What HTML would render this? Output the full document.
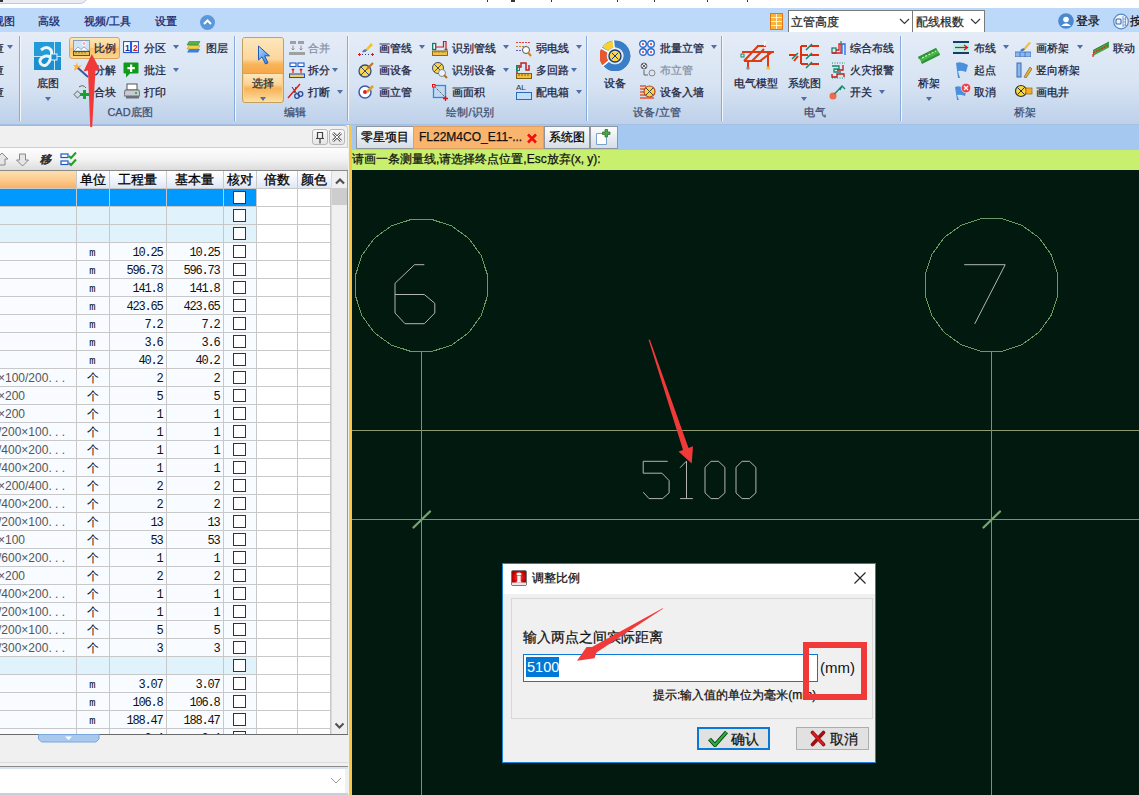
<!DOCTYPE html>
<html><head><meta charset="utf-8">
<style>
*{box-sizing:border-box;margin:0;padding:0}
html,body{width:1139px;height:795px;overflow:hidden;background:#fff;-webkit-text-stroke:0.25px currentColor;font-family:"Liberation Sans",sans-serif;font-size:12px;color:#18223e}
.a{position:absolute}
.t{position:absolute;white-space:nowrap;line-height:14px;height:14px}
#top{left:0;top:0;width:1139px;height:8px;background:#fff}
#menu{left:0;top:8px;width:1139px;height:24px;background:#bdd9fa}
#ribbon{left:0;top:32px;width:1139px;height:93px;background:linear-gradient(#e4ecf7,#d8e4f3 55%,#bed1ea);border-bottom:1px solid #a4c0e2}
.sep{position:absolute;top:36px;width:2px;height:85px;border-left:1px solid #86aadc;border-right:1px solid #f4f8fc}
.gl{position:absolute;top:105px;height:14px;line-height:14px;font-size:11px;color:#3e4e70;text-align:center;white-space:nowrap}
.dd{position:absolute;width:0;height:0;border-left:3.5px solid transparent;border-right:3.5px solid transparent;border-top:4px solid #4f6fa8}
#lp{left:0;top:125px;width:349px;height:670px;background:#f0f0f0}
#split{left:349px;top:125px;width:3px;height:670px;background:#f7c845}
#tabs{left:352px;top:125px;width:787px;height:25px;background:#a4c8ef}
#cmd{left:352px;top:150px;width:787px;height:20px;background:#c8ef6e}
#canvas{left:352px;top:170px;width:787px;height:625px;background:#021910}
.tab{position:absolute;top:126px;height:23px;border:1px solid #8e96a0;background:linear-gradient(#fbfbfc,#e9edf2 50%,#d6dde6);line-height:21px;color:#111;font-size:12px;white-space:nowrap}
.row{position:absolute;left:0;width:331px;height:18px}
.c{position:absolute;top:0;height:18px;line-height:18px;white-space:nowrap;-webkit-text-stroke:0}
.num{font-family:"Liberation Mono",monospace;font-size:12px;letter-spacing:-1.2px;color:#111;text-align:right;padding-top:1px}
.cb{position:absolute;top:2px;left:233px;width:13px;height:13px;border:1px solid #333;background:#fff}
</style></head><body>
<div id="top" class="a"></div>
<div class="a" style="left:-10px;top:-6px;width:98px;height:10px;border:1px solid #c4c8d0;border-radius:0 0 8px 8px;background:#e9edf3"></div>
<div class="a" style="left:0;top:0;width:3px;height:2px;background:#333"></div>
<div class="a" style="left:487px;top:0;width:1px;height:2px;background:#333"></div><div class="a" style="left:511px;top:0;width:4px;height:2px;background:#333"></div><div class="a" style="left:551px;top:0;width:1px;height:2px;background:#333"></div><div class="a" style="left:617px;top:0;width:1px;height:2px;background:#333"></div><div class="a" style="left:654px;top:0;width:1px;height:2px;background:#333"></div><div class="a" style="left:707px;top:0;width:1px;height:2px;background:#333"></div><div class="a" style="left:747px;top:0;width:1px;height:2px;background:#333"></div>
<div id="menu" class="a"></div>
<div class="t" style="left:-7px;top:14px;font-size:11px;color:#15246a">视图</div>
<div class="t" style="left:38px;top:14px;font-size:11px;color:#15246a">高级</div>
<div class="t" style="left:84px;top:14px;font-size:11px;color:#15246a">视频/工具</div>
<div class="t" style="left:155px;top:14px;font-size:11px;color:#15246a">设置</div>
<div class="a" style="left:200px;top:15px;width:15px;height:15px;border-radius:50%;background:#5a98dc"></div>
<svg class="a" style="left:200px;top:15px" width="15" height="15"><polyline points="4,9 7.5,5.5 11,9" fill="none" stroke="#fff" stroke-width="2"/></svg>
<svg class="a" style="left:770px;top:13px" width="13" height="17"><rect x="0.5" y="0.5" width="12" height="16" fill="#f9b23a" stroke="#e07818"/><g stroke="#fff3c8" stroke-width="1"><line x1="6.5" y1="1" x2="6.5" y2="16"/><line x1="1" y1="4.5" x2="12" y2="4.5"/><line x1="1" y1="8.5" x2="12" y2="8.5"/><line x1="1" y1="12.5" x2="12" y2="12.5"/></g></svg>
<div class="a" style="left:788px;top:10px;width:125px;height:23px;background:#fff;border:1px solid #7a7a7a;border-bottom:none"></div>
<div class="t" style="left:791px;top:15px;color:#2a2a2a;font-size:12px">立管高度</div>
<svg class="a" style="left:899px;top:18px" width="11" height="7"><polyline points="1,1 5.5,5.5 10,1" fill="none" stroke="#333" stroke-width="1.1"/></svg>
<div class="a" style="left:912px;top:10px;width:73px;height:23px;background:#fff;border:1px solid #7a7a7a;border-bottom:none"></div>
<div class="t" style="left:916px;top:15px;color:#2a2a2a;font-size:12px">配线根数</div>
<svg class="a" style="left:970px;top:18px" width="11" height="7"><polyline points="1,1 5.5,5.5 10,1" fill="none" stroke="#333" stroke-width="1.1"/></svg>
<svg class="a" style="left:1058px;top:13px" width="16" height="16"><circle cx="8" cy="8" r="7.8" fill="#4a88d0"/><circle cx="8" cy="6.5" r="2.8" fill="#fff"/><path d="M3 13 Q8 7.5 13 13 Z" fill="#fff"/></svg>
<div class="t" style="left:1076px;top:14px;color:#111">登录</div>
<svg class="a" style="left:1113px;top:13px" width="16" height="17"><circle cx="8" cy="8.5" r="7.3" fill="#eef4fb" stroke="#5a88c0" stroke-width="1.2"/><rect x="3" y="6" width="5" height="5" rx="1" fill="none" stroke="#3a6aa8" stroke-width="1.1"/><path d="M10 3v11M12.5 4v9M10 6h3M10 9h3M10 12h3" stroke="#7aa0d0" stroke-width="1"/></svg>
<div class="t" style="left:1130px;top:14px;color:#111">按</div>
<div id="ribbon" class="a"></div>
<div class="sep" style="left:19px"></div>
<div class="sep" style="left:234px"></div>
<div class="sep" style="left:347px"></div>
<div class="sep" style="left:586px"></div>
<div class="sep" style="left:721px"></div>
<div class="sep" style="left:900px"></div>
<div class="t" style="left:-7px;top:41px;font-size:11px">查</div>
<div class="t" style="left:-7px;top:63px;font-size:11px">查</div>
<div class="t" style="left:-7px;top:85px;font-size:11px">查</div>
<div class="dd" style="left:6.5px;top:45px"></div>
<svg class="a" style="left:34px;top:42px" width="27" height="28" viewBox="0 0 27 28"><rect width="27" height="28" fill="#1b8fd0"/><rect x="0" y="0" width="27" height="14" fill="#2aa3e0" opacity=".6"/><line x1="0" y1="14.5" x2="27" y2="14.5" stroke="#bfe6fa"/><line x1="20.5" y1="0" x2="20.5" y2="28" stroke="#bfe6fa"/><path d="M7 8 Q13 3 17 8 Q19 12 15 20 Q11 26 7 22 Q4 18 9 15 Q13 13 16 15" fill="none" stroke="#e8f6fd" stroke-width="3"/><rect x="17" y="12" width="6" height="6" fill="#1b8fd0" stroke="#e8f6fd"/></svg>
<div class="t" style="left:8.0px;top:76px;width:80px;text-align:center;font-size:11px">底图</div>
<div class="dd" style="left:44.5px;top:97px"></div>
<div class="a" style="left:69px;top:37px;width:51px;height:22px;border:1px solid #d9a35a;border-radius:3px;background:linear-gradient(#fde6b8,#fbd38f 50%,#f8c06a 51%,#fbd58f)"></div>
<svg class="a" style="left:73px;top:40px" width="17" height="16" viewBox="0 0 17 16"><rect x="0.5" y="0.5" width="16" height="11" fill="#cfe4f6" stroke="#8aa0b8"/><circle cx="11" cy="3.5" r="2" fill="#f8b0a0" stroke="#fff"/><path d="M1 11 L5 7 L8 9.5 L11 7 L16 11Z" fill="#fff" stroke="#7a8aa0" stroke-width=".7"/><rect x="0.5" y="11.5" width="16" height="4" fill="#e8c050" stroke="#6a5010" stroke-width="1"/><path d="M3 12v1.5M6 12v1.5M9 12v1.5M12 12v1.5" stroke="#6a5010" stroke-width=".8"/></svg>
<div class="t" style="left:94px;top:41px;font-size:11px">比例</div>
<svg class="a" style="left:73px;top:62px" width="17" height="16" viewBox="0 0 17 16"><path d="M4 0 L5 4 L9 3 L6 6 L8 9 L4 7 L1 9 L2 5 L0 3 L3 3Z" fill="#ffb040"/><line x1="5" y1="6" x2="15" y2="15" stroke="#3a5a9a" stroke-width="2"/></svg>
<div class="t" style="left:94px;top:63px;font-size:11px">分解</div>
<svg class="a" style="left:73px;top:84px" width="17" height="16" viewBox="0 0 17 16"><path d="M6 3 Q10 0 13 4" fill="none" stroke="#666" stroke-width="1"/><rect x="2" y="8" width="5" height="5" transform="rotate(45 4.5 10.5)" fill="none" stroke="#888"/><path d="M10 6h3v3h3v3h-3v3h-3v-3h-3v-3h3z" fill="#18a030"/></svg>
<div class="t" style="left:94px;top:85px;font-size:11px">合块</div>
<svg class="a" style="left:123px;top:41px" width="16" height="13" viewBox="0 0 16 13"><rect x="0.5" y="0.5" width="7" height="11" fill="#fff" stroke="#2a5ad8" stroke-width="1.2"/><rect x="8.5" y="0.5" width="7" height="11" fill="#fff" stroke="#2a5ad8" stroke-width="1.2"/><text x="2" y="9.5" font-size="8.5" font-family="Liberation Sans" fill="#1a2a88" font-weight="bold">1</text><text x="10" y="9.5" font-size="8.5" font-family="Liberation Sans" fill="#d01818" font-weight="bold">2</text></svg>
<div class="t" style="left:144px;top:41px;font-size:11px">分区</div>
<div class="dd" style="left:172.5px;top:45px"></div>
<svg class="a" style="left:123px;top:62px" width="16" height="16" viewBox="0 0 16 16"><path d="M1.5 0.5 H14.5 Q15.5 0.5 15.5 1.5 V10.5 Q15.5 11.5 14.5 11.5 H7 L3 15.5 V11.5 H1.5 Q0.5 11.5 0.5 10.5 V1.5 Q0.5 0.5 1.5 0.5Z" fill="#109a1a"/><path d="M7 2.5h2.2v2.6h2.6v2.2h-2.6v2.6h-2.2v-2.6h-2.6v-2.2h2.6z" fill="#fff"/></svg>
<div class="t" style="left:144px;top:63px;font-size:11px">批注</div>
<div class="dd" style="left:172.5px;top:68px"></div>
<svg class="a" style="left:124px;top:83px" width="16" height="16" viewBox="0 0 16 16"><rect x="3" y="1" width="10" height="6" fill="#fff" stroke="#555"/><path d="M1 7h14l1 6h-16z" fill="#c8ccd2" stroke="#555" stroke-width=".8"/><rect x="2" y="13" width="13" height="2.5" fill="#6a6e78"/><rect x="11" y="9" width="2" height="2" fill="#20c040"/></svg>
<div class="t" style="left:144px;top:85px;font-size:11px">打印</div>
<svg class="a" style="left:186px;top:41px" width="15" height="12" viewBox="0 0 15 12"><path d="M3 8 H14 L12 11.5 H1Z" fill="#3a7ee0"/><path d="M3 4.5 H14 L12 8 H1Z" fill="#f2d048" stroke="#b88a10" stroke-width=".5"/><path d="M3 0.5 H14 L12 4 H1Z" fill="#58b048" stroke="#2a7a2a" stroke-width=".5"/></svg>
<div class="t" style="left:206px;top:41px;font-size:11px">图层</div>
<div class="gl" style="left:80.0px;width:100px">CAD底图</div>
<div class="a" style="left:242px;top:37px;width:42px;height:66px;border:1px solid #c4a060;border-radius:3px;background:#fbd08a;overflow:hidden"><div class="a" style="left:0;top:0;width:40px;height:35px;background:linear-gradient(#fde6bc,#fcd79c 60%,#f8b45a 75%,#f6a848)"></div><div class="a" style="left:0;top:35px;width:40px;height:1px;background:#c8a868"></div><div class="a" style="left:1px;top:36px;width:38px;height:29px;background:linear-gradient(#fde6bc,#fbd495 35%,#f7b458 50%,#f9c070 65%,#fde4a8)"></div></div>
<svg class="a" style="left:257px;top:45px" width="14" height="22" viewBox="0 0 14 22"><defs><linearGradient id="cg" x1="0" y1="0" x2="1" y2="1"><stop offset="0" stop-color="#b8dcff"/><stop offset="1" stop-color="#2a78e0"/></linearGradient></defs><path d="M1.5 1 L1.5 15 L5 11.8 L8.5 19 L11 17.8 L7.6 10.8 L12.5 10.8Z" fill="url(#cg)" stroke="#1a5ac0" stroke-width="1"/></svg>
<div class="t" style="left:223.0px;top:76px;width:80px;text-align:center;font-size:11px;color:#2a2a2a">选择</div>
<div class="dd" style="left:259.5px;top:97px"></div>
<svg class="a" style="left:289px;top:40px" width="16" height="16" viewBox="0 0 16 16"><rect x="1" y="1" width="6" height="3" fill="#a0a0a0"/><rect x="9" y="1" width="6" height="3" fill="#a0a0a0"/><rect x="0" y="12" width="16" height="3" fill="#a0a0a0"/><path d="M4 5.5 V10 M2.5 8.5 L4 10 L5.5 8.5 M12 5.5 V10 M10.5 8.5 L12 10 L13.5 8.5" fill="none" stroke="#888" stroke-width=".9"/></svg>
<div class="t" style="left:308px;top:41px;font-size:11px;color:#8a93a4">合并</div>
<svg class="a" style="left:289px;top:62px" width="16" height="17" viewBox="0 0 16 17"><rect x="1" y="1" width="6" height="3.5" fill="#fff" stroke="#1a58c8" stroke-width="1.1"/><rect x="9" y="1" width="6" height="3.5" fill="#fff" stroke="#1a58c8" stroke-width="1.1"/><rect x="0.5" y="12" width="15" height="3.5" fill="#f8d060" stroke="#1a58c8" stroke-width="1.1"/><path d="M4 11 V7 M2.8 8.2 L4 7 L5.2 8.2 M12 11 V7 M10.8 8.2 L12 7 L13.2 8.2" fill="none" stroke="#d81818" stroke-width="1.1"/></svg>
<div class="t" style="left:308px;top:63px;font-size:11px">拆分</div>
<div class="dd" style="left:331.5px;top:68px"></div>
<svg class="a" style="left:287px;top:83px" width="18" height="17" viewBox="0 0 18 17"><path d="M5 4 L10 11 M9 4 L7 10" stroke="#333" stroke-width="1"/><circle cx="10" cy="13" r="2.3" fill="none" stroke="#2a4a9a" stroke-width="1.3"/><circle cx="13.5" cy="11" r="2.3" fill="none" stroke="#2a4a9a" stroke-width="1.3"/><line x1="1" y1="15" x2="13" y2="1" stroke="#e81818" stroke-width="1.4"/></svg>
<div class="t" style="left:308px;top:85px;font-size:11px">打断</div>
<div class="dd" style="left:336.5px;top:90px"></div>
<div class="gl" style="left:245.0px;width:100px">编辑</div>
<svg class="a" style="left:358px;top:41px" width="16" height="15" viewBox="0 0 16 15"><path d="M7 9 L13 2 L15 4 L9 10Z" fill="#f0c030"/><path d="M4 11 Q6 7 9 9 Q8 12 4 11Z" fill="#4a78c8"/><line x1="1" y1="13.5" x2="15" y2="13.5" stroke="#2a3a8a" stroke-dasharray="1 2"/><path d="M0 13.5h3M1.5 12v3M13 13.5h3M14.5 12v3" stroke="#e01818"/></svg>
<div class="t" style="left:379px;top:41px;font-size:11px">画管线</div>
<div class="dd" style="left:418.5px;top:45px"></div>
<svg class="a" style="left:358px;top:62px" width="16" height="16" viewBox="0 0 16 16"><circle cx="7" cy="9" r="6" fill="#f4d850" stroke="#3a4a7a" stroke-width="1.3"/><line x1="3" y1="5" x2="11" y2="13" stroke="#3a4a7a"/><line x1="11" y1="5" x2="3" y2="13" stroke="#3a4a7a"/><path d="M9 7 L15 1" stroke="#c07020" stroke-width="2"/></svg>
<div class="t" style="left:379px;top:63px;font-size:11px">画设备</div>
<svg class="a" style="left:358px;top:84px" width="16" height="15" viewBox="0 0 16 15"><circle cx="7" cy="8" r="6" fill="#fff" stroke="#3a5ab0" stroke-width="1.5"/><circle cx="7" cy="8" r="2" fill="#e02020"/><path d="M9 8 L15 2" stroke="#e0a020" stroke-width="2.5"/></svg>
<div class="t" style="left:379px;top:85px;font-size:11px">画立管</div>
<svg class="a" style="left:432px;top:40px" width="16" height="17" viewBox="0 0 16 17"><rect x="0.7" y="3.5" width="3" height="6" fill="#fff" stroke="#117766" stroke-width="1.3"/><path d="M4 7 H11.5 V1.5 H14 V9" fill="none" stroke="#d01818" stroke-width="1.2"/><path d="M12.5 9.5 H15.5" stroke="#117766" stroke-width="1.5"/><rect x="0.5" y="11" width="15" height="4.5" fill="#f0c048" stroke="#806010" stroke-width=".9"/><path d="M3 11v2M5 11v1.3M7 11v2M9 11v1.3M11 11v2M13 11v1.3" stroke="#806010" stroke-width=".7"/></svg>
<div class="t" style="left:452px;top:41px;font-size:11px">识别管线</div>
<div class="dd" style="left:502.5px;top:45px"></div>
<svg class="a" style="left:432px;top:62px" width="16" height="17" viewBox="0 0 16 17"><circle cx="6" cy="6" r="5.5" fill="#f4d850" stroke="#4a4a6a"/><line x1="2" y1="2" x2="10" y2="10" stroke="#4a4a6a"/><line x1="10" y1="2" x2="2" y2="10" stroke="#4a4a6a"/><circle cx="10" cy="11" r="3.5" fill="#eef4fb" stroke="#7a8aa0"/><line x1="12" y1="13" x2="15" y2="16" stroke="#b07020" stroke-width="2"/></svg>
<div class="t" style="left:452px;top:63px;font-size:11px">识别设备</div>
<div class="dd" style="left:502.5px;top:68px"></div>
<svg class="a" style="left:432px;top:84px" width="16" height="17" viewBox="0 0 16 17"><rect x="1.5" y="1.5" width="12" height="12" fill="#c0d8f0" stroke="#2a8ae8" stroke-width="1.3"/><line x1="2" y1="2" x2="13" y2="13" stroke="#333" stroke-dasharray="1 1.2"/><rect x="0.5" y="0.5" width="2.5" height="2.5" fill="#fff" stroke="#e01010" stroke-width="1"/><path d="M11 14.5h5M13.5 12v5" stroke="#e01010" stroke-width="1.3"/></svg>
<div class="t" style="left:452px;top:85px;font-size:11px">画面积</div>
<svg class="a" style="left:516px;top:40px" width="16" height="17" viewBox="0 0 16 17"><line x1="0" y1="2.5" x2="14" y2="2.5" stroke="#e04040" stroke-dasharray="2 1"/><line x1="0" y1="6.5" x2="10" y2="6.5" stroke="#c09030" stroke-dasharray="2 1"/><line x1="0" y1="10.5" x2="8" y2="10.5" stroke="#6a5ab8" stroke-dasharray="2 1"/><circle cx="10" cy="10" r="3.5" fill="#fff" stroke="#555"/><line x1="12" y1="12.5" x2="15" y2="16" stroke="#d08020" stroke-width="2"/></svg>
<div class="t" style="left:536px;top:41px;font-size:11px">弱电线</div>
<div class="dd" style="left:575.5px;top:45px"></div>
<svg class="a" style="left:516px;top:62px" width="16" height="17" viewBox="0 0 16 17"><path d="M1 11 V5 H5 V1 H10 V8 H13 V3" fill="none" stroke="#c02020" stroke-width="1.5"/><rect x="0.5" y="3.5" width="3" height="5" fill="none" stroke="#118866"/><rect x="0.5" y="11.5" width="15" height="5" fill="#f0c040" stroke="#806010"/><path d="M3 12v2M6 12v2M9 12v2M12 12v2" stroke="#806010"/></svg>
<div class="t" style="left:536px;top:63px;font-size:11px">多回路</div>
<div class="dd" style="left:570.5px;top:68px"></div>
<svg class="a" style="left:516px;top:83px" width="16" height="17" viewBox="0 0 16 17"><text x="0" y="7" font-size="8" font-family="Liberation Sans" fill="#333">AL</text><rect x="0.5" y="9.5" width="15" height="7" fill="#bfe0f8" stroke="#2a6ab8"/></svg>
<div class="t" style="left:536px;top:85px;font-size:11px">配电箱</div>
<div class="dd" style="left:575.5px;top:90px"></div>
<div class="gl" style="left:420.0px;width:100px">绘制/识别</div>
<svg class="a" style="left:600px;top:40px" width="31" height="31" viewBox="0 0 31 31"><circle cx="15" cy="16" r="12" fill="none" stroke="#3a7ec8" stroke-width="6.5"/><path d="M4.82 9.64 A12 12 0 1 1 4.61 10.00" fill="none" stroke="#3a7ec8" stroke-width="6.5"/><path d="M5.29 23.05 A12 12 0 0 1 4.21 10.74" fill="none" stroke="#e8582c" stroke-width="7"/><path d="M5.29 8.95 A12 12 0 0 1 13.33 4.12" fill="none" stroke="#f8d030" stroke-width="7"/><path d="M8.94 12.50 L1.14 8.00 M14.27 9.04 L13.33 0.09 M9.56 20.41 L2.57 26.07" stroke="#fff" stroke-width="1.5"/><circle cx="15" cy="16" r="6" fill="#f8d850" stroke="#1a3a7a" stroke-width="1.4"/><path d="M11.8 12.8 L18.2 19.2 M18.2 12.8 L11.8 19.2" stroke="#1a3a7a" stroke-width="1"/></svg>
<div class="t" style="left:574.5px;top:76px;width:80px;text-align:center;font-size:11px">设备</div>
<svg class="a" style="left:639px;top:40px" width="16" height="16" viewBox="0 0 16 16"><circle cx="4" cy="4" r="3.3" fill="#fff" stroke="#2a6ad8" stroke-width="1.4"/><circle cx="12" cy="4" r="3.3" fill="#fff" stroke="#2a6ad8" stroke-width="1.4"/><circle cx="4" cy="12" r="3.3" fill="#fff" stroke="#2a6ad8" stroke-width="1.4"/><circle cx="12" cy="12" r="3.3" fill="#fff" stroke="#2a6ad8" stroke-width="1.4"/><circle cx="4" cy="4" r="1" fill="#e02020"/><circle cx="12" cy="4" r="1" fill="#e02020"/><circle cx="4" cy="12" r="1" fill="#e02020"/><circle cx="12" cy="12" r="1" fill="#e02020"/></svg>
<div class="t" style="left:660px;top:41px;font-size:11px">批量立管</div>
<div class="dd" style="left:710.5px;top:45px"></div>
<svg class="a" style="left:640px;top:62px" width="16" height="16" viewBox="0 0 16 16"><circle cx="4" cy="4" r="3" fill="none" stroke="#666"/><line x1="2" y1="2" x2="6" y2="6" stroke="#666"/><line x1="6" y1="2" x2="2" y2="6" stroke="#666"/><circle cx="12" cy="11" r="3" fill="none" stroke="#888"/><path d="M4 8 V13 H8" fill="none" stroke="#666"/></svg>
<div class="t" style="left:660px;top:63px;font-size:11px;color:#8a93a4">布立管</div>
<svg class="a" style="left:640px;top:84px" width="16" height="15" viewBox="0 0 16 15"><path d="M0 2h6M0 5h6M0 8h6M0 11h6M0 14h14" stroke="#e05a30" stroke-width="1.3"/><circle cx="9.5" cy="7.5" r="5.5" fill="#f8d840" stroke="#c04020" stroke-width="1.2"/><line x1="6" y1="4" x2="13" y2="11" stroke="#444"/><line x1="13" y1="4" x2="6" y2="11" stroke="#444"/></svg>
<div class="t" style="left:660px;top:85px;font-size:11px">设备入墙</div>
<div class="gl" style="left:607.0px;width:100px">设备/立管</div>
<svg class="a" style="left:740px;top:41px" width="34" height="29" viewBox="0 0 34 29"><path d="M2 11 H34 M17 5 H26 M4 20 L18 5 M12 20 L24 8 M20 20 L32 11 M28 11 V26 M8 20 V26 M4 20 H22" fill="none" stroke="#e03a10" stroke-width="2"/><rect x="24" y="0" width="1.5" height="5" fill="#fff"/><rect x="1" y="13" width="3" height="3" fill="none" stroke="#118866"/><rect x="6.5" y="26" width="3" height="2.5" fill="#888"/><rect x="26.5" y="25.5" width="3.5" height="3" fill="#f8c030"/></svg>
<div class="t" style="left:716.0px;top:76px;width:80px;text-align:center;font-size:11px">电气模型</div>
<svg class="a" style="left:788px;top:42px" width="32" height="27" viewBox="0 0 32 27"><path d="M1 13 H8 M10 14 L6 19 M13 4 V22 M13 4 H19 M13 13 H20 M13 22 H20 M22 4 H31 M22 13 H31 M22 22 H31" fill="none" stroke="#e03010" stroke-width="2"/><path d="M4 17 L10 11 M18 8 L24 2 M18 17 L24 11 M18 26 L24 20" stroke="#118866" stroke-width="1.5"/></svg>
<div class="t" style="left:764.5px;top:76px;width:80px;text-align:center;font-size:11px">系统图</div>
<div class="dd" style="left:801.0px;top:97px"></div>
<svg class="a" style="left:831px;top:40px" width="15" height="16" viewBox="0 0 15 16"><rect x="1" y="8" width="4" height="5" fill="none" stroke="#118866" stroke-width="1.3"/><path d="M5 10 H8 V4 H10 V13 H1" fill="none" stroke="#d02020" stroke-width="1.3"/><path d="M11 14 V4 H14 V15" fill="none" stroke="#2a6ae0" stroke-width="1.3"/><path d="M10 1 V4" stroke="#20a040" stroke-width="1.3"/></svg>
<div class="t" style="left:850px;top:41px;font-size:11px">综合布线</div>
<svg class="a" style="left:831px;top:62px" width="15" height="17" viewBox="0 0 15 17"><path d="M1 1 H14 M1 16 H14" stroke="#118866" stroke-width="1" stroke-dasharray="1 1.5"/><path d="M1 4 H8 V7 H3 V10 H10" fill="none" stroke="#118866" stroke-width="1.3"/><path d="M12 3 V8 H6 M1 12 V15 H6 V12 H13 V15" fill="none" stroke="#c01818" stroke-width="1.3"/></svg>
<div class="t" style="left:850px;top:63px;font-size:11px">火灾报警</div>
<svg class="a" style="left:829px;top:83px" width="17" height="17" viewBox="0 0 17 17"><circle cx="4" cy="13" r="3.5" fill="#f06a4a"/><path d="M5.5 11 L13 3 L16 6 M13 3 L11 7" fill="none" stroke="#118866" stroke-width="1.4"/></svg>
<div class="t" style="left:850px;top:85px;font-size:11px">开关</div>
<div class="dd" style="left:878.5px;top:90px"></div>
<div class="gl" style="left:765.0px;width:100px">电气</div>
<svg class="a" style="left:917px;top:46px" width="25" height="19" viewBox="0 0 25 19"><path d="M1 11 L19 2 L23 8 L5 17Z" fill="#48b44a"/><path d="M1 11 L19 2 L20 4 L2 13Z" fill="#2e9434"/><path d="M4 16 L22 7 L23 9 L5 18Z" fill="#2e9434"/><path d="M5 12 L19 5" stroke="#c8f0c0" stroke-width="1.2" stroke-dasharray="2 1.6"/></svg>
<div class="t" style="left:889.0px;top:76px;width:80px;text-align:center;font-size:11px">桥架</div>
<div class="dd" style="left:925.5px;top:97px"></div>
<svg class="a" style="left:953px;top:41px" width="16" height="13" viewBox="0 0 16 13"><rect x="0" y="2" width="16" height="9" fill="#b8f2e6"/><rect x="0" y="0" width="16" height="2" fill="#1a3a6a"/><rect x="0" y="11" width="16" height="2" fill="#1a3a6a"/><line x1="2" y1="6.5" x2="14" y2="6.5" stroke="#e01010" stroke-width="1.3"/><path d="M11 4 L14.5 6.5 L11 9" fill="none" stroke="#e01010" stroke-width="1.3"/></svg>
<div class="t" style="left:974px;top:41px;font-size:11px">布线</div>
<div class="dd" style="left:1002.5px;top:45px"></div>
<svg class="a" style="left:955px;top:62px" width="14" height="16" viewBox="0 0 14 16"><path d="M1 1 Q6 -1 13 3 L11 10 Q6 8 3 9 L5 16 L3 16Z" fill="#4a90dc"/></svg>
<div class="t" style="left:974px;top:63px;font-size:11px">起点</div>
<svg class="a" style="left:953px;top:83px" width="18" height="18" viewBox="0 0 18 18"><path d="M2 4 Q7 2 14 6 L12 13 Q7 11 4 12 L6 17 L4 17Z" fill="#4a90dc"/><circle cx="13" cy="5" r="4.8" fill="#e8404a" stroke="#fff" stroke-width=".6"/><path d="M11 3l4 4M15 3l-4 4" stroke="#fff" stroke-width="1.2"/></svg>
<div class="t" style="left:974px;top:85px;font-size:11px">取消</div>
<svg class="a" style="left:1015px;top:40px" width="16" height="17" viewBox="0 0 16 17"><path d="M8 9 L14 2 L16 3 L10 10Z" fill="#f0c030"/><path d="M5 11 Q7 7 10 9 Q9 12 5 11Z" fill="#4a78c8"/><rect x="0" y="12" width="16" height="5" fill="#8ab8e8" stroke="#3a6ab8" stroke-width=".8"/><path d="M5 12v5M10 12v5" stroke="#3a6ab8" stroke-width=".8"/></svg>
<div class="t" style="left:1036px;top:41px;font-size:11px">画桥架</div>
<div class="dd" style="left:1076.5px;top:45px"></div>
<svg class="a" style="left:1016px;top:62px" width="16" height="16" viewBox="0 0 16 16"><rect x="1" y="1" width="4" height="14" fill="#8ab8e8" stroke="#3a6ab8"/><path d="M8 15 L14 5 L16 7 L10 16Z" fill="#e8b040" stroke="#806020" stroke-width=".7"/></svg>
<div class="t" style="left:1036px;top:63px;font-size:11px">竖向桥架</div>
<svg class="a" style="left:1015px;top:84px" width="18" height="14" viewBox="0 0 18 14"><circle cx="6" cy="7" r="5.5" fill="#f8d840" stroke="#333" stroke-width="1.2"/><line x1="2.5" y1="3.5" x2="9.5" y2="10.5" stroke="#333"/><line x1="9.5" y1="3.5" x2="2.5" y2="10.5" stroke="#333"/><rect x="11" y="4" width="6" height="6" fill="#f0b020" stroke="#a06010" stroke-width=".7"/></svg>
<div class="t" style="left:1036px;top:85px;font-size:11px">画电井</div>
<svg class="a" style="left:1092px;top:41px" width="18" height="16" viewBox="0 0 18 16"><path d="M1 9.5 L17 1 L17 6.5 L1 15Z" fill="#44a848"/><path d="M1 9.5 L17 1" stroke="#2a8030" stroke-width="1"/><path d="M1 12 L17 3.8" stroke="#e82020" stroke-width="1.4" stroke-dasharray="2 1"/><path d="M1 13 L1 16" stroke="#e82020" stroke-width="1.2"/></svg>
<div class="t" style="left:1113px;top:41px;font-size:11px">联动</div>
<div class="gl" style="left:974.5px;width:100px">桥架</div><div id="lp" class="a"></div>
<div class="a" style="left:-4px;top:125px;width:352px;height:23px;border:1px solid #cfcfcf;border-top-color:#b4b4b4;border-radius:0 4px 0 0;background:#f0f0f0"></div>
<div class="a" style="left:312px;top:129px;width:16px;height:16px;border:1px solid #b8b8b8;border-radius:3px;background:linear-gradient(#fafafa,#e6e6e6)"></div>
<div class="a" style="left:329px;top:129px;width:16px;height:16px;border:1px solid #b8b8b8;border-radius:3px;background:linear-gradient(#fafafa,#e6e6e6)"></div>
<svg class="a" style="left:312px;top:129px" width="16" height="16"><path d="M5.5 3.5h5v6h-5z M4 9.5h8 M8 9.5v5" fill="none" stroke="#444" stroke-width="1.2"/></svg>
<svg class="a" style="left:329px;top:129px" width="16" height="16"><path d="M4 4 L12 12 M12 4 L4 12" stroke="#666" stroke-width="2.6"/><path d="M4 4 L12 12 M12 4 L4 12" stroke="#fff" stroke-width="1"/></svg>
<div class="a" style="left:0;top:148px;width:348px;height:23px;background:linear-gradient(#fdfdfd,#f4f4f4 50%,#dcdcdc);border-bottom:1px solid #8a8a8a"></div>
<svg class="a" style="left:0;top:152px" width="80" height="16"><path d="M-4 7 L2 1 L8 7 L5 7 L5 13 L-1 13 L-1 7Z" fill="#e6e6e6" stroke="#888" stroke-width="1"/><path d="M16.5 8 L22.5 14 L28.5 8 L25.5 8 L25.5 2 L19.5 2 L19.5 8Z" fill="#e6e6e6" stroke="#888" stroke-width="1"/></svg>
<div class="t" style="left:40px;top:152px;font-size:11px;font-weight:bold;color:#333;font-family:'Liberation Serif',serif;font-style:italic">移</div>
<svg class="a" style="left:60px;top:152px" width="18" height="15"><rect x="1" y="2" width="7" height="3.5" fill="#fff" stroke="#1a5ac8" stroke-width="1.2"/><rect x="1" y="9" width="7" height="3.5" fill="#fff" stroke="#1a5ac8" stroke-width="1.2"/><path d="M9 4 L11 6 L16 0.5 M9 11 L11 13 L16 7.5" fill="none" stroke="#20a020" stroke-width="2"/></svg>
<div class="a" style="left:0;top:171px;width:331px;height:18px;background:linear-gradient(#ffffff,#eef3fb 60%,#dde6f4);border-bottom:1px solid #c8c8c8"></div>
<div class="a" style="left:0;top:171px;width:76px;height:17px;background:linear-gradient(#fde0b0,#fcc888 60%,#f8b06a)"></div>
<div class="a" style="left:76px;top:171px;width:1px;height:18px;background:#c8c8c8"></div>
<div class="c" style="left:76px;top:171px;width:33px;text-align:center;color:#000;font-size:12.5px;-webkit-text-stroke:0.3px #000">单位</div>
<div class="a" style="left:109px;top:171px;width:1px;height:18px;background:#c8c8c8"></div>
<div class="c" style="left:109px;top:171px;width:57px;text-align:center;color:#000;font-size:12.5px;-webkit-text-stroke:0.3px #000">工程量</div>
<div class="a" style="left:166px;top:171px;width:1px;height:18px;background:#c8c8c8"></div>
<div class="c" style="left:166px;top:171px;width:57px;text-align:center;color:#000;font-size:12.5px;-webkit-text-stroke:0.3px #000">基本量</div>
<div class="a" style="left:223px;top:171px;width:1px;height:18px;background:#c8c8c8"></div>
<div class="c" style="left:223px;top:171px;width:33px;text-align:center;color:#000;font-size:12.5px;-webkit-text-stroke:0.3px #000">核对</div>
<div class="a" style="left:256px;top:171px;width:1px;height:18px;background:#c8c8c8"></div>
<div class="c" style="left:256px;top:171px;width:41px;text-align:center;color:#000;font-size:12.5px;-webkit-text-stroke:0.3px #000">倍数</div>
<div class="a" style="left:297px;top:171px;width:1px;height:18px;background:#c8c8c8"></div>
<div class="c" style="left:297px;top:171px;width:33px;text-align:center;color:#000;font-size:12.5px;-webkit-text-stroke:0.3px #000">颜色</div>
<div class="a" style="left:0;top:189px;width:331px;height:545px;overflow:hidden;background:#fff">
<div class="row" style="top:0px;background:#fff">
<div class="a" style="left:0;top:0;width:256px;height:18px;background:#0099ff"></div>
<div class="a" style="left:0;top:17px;width:331px;height:1px;background:#c8c8c8"></div>
<div class="a" style="left:76px;top:0;width:1px;height:18px;background:#c8c8c8"></div>
<div class="a" style="left:109px;top:0;width:1px;height:18px;background:#c8c8c8"></div>
<div class="a" style="left:166px;top:0;width:1px;height:18px;background:#c8c8c8"></div>
<div class="a" style="left:223px;top:0;width:1px;height:18px;background:#c8c8c8"></div>
<div class="a" style="left:256px;top:0;width:1px;height:18px;background:#c8c8c8"></div>
<div class="a" style="left:297px;top:0;width:1px;height:18px;background:#c8c8c8"></div>
<div class="a" style="left:330px;top:0;width:1px;height:18px;background:#c8c8c8"></div>
<div class="cb"></div>
</div>
<div class="row" style="top:18px;background:#fff">
<div class="a" style="left:0;top:0;width:256px;height:18px;background:#e0f2fc"></div>
<div class="a" style="left:0;top:17px;width:331px;height:1px;background:#c8c8c8"></div>
<div class="a" style="left:76px;top:0;width:1px;height:18px;background:#c8c8c8"></div>
<div class="a" style="left:109px;top:0;width:1px;height:18px;background:#c8c8c8"></div>
<div class="a" style="left:166px;top:0;width:1px;height:18px;background:#c8c8c8"></div>
<div class="a" style="left:223px;top:0;width:1px;height:18px;background:#c8c8c8"></div>
<div class="a" style="left:256px;top:0;width:1px;height:18px;background:#c8c8c8"></div>
<div class="a" style="left:297px;top:0;width:1px;height:18px;background:#c8c8c8"></div>
<div class="a" style="left:330px;top:0;width:1px;height:18px;background:#c8c8c8"></div>
<div class="cb"></div>
</div>
<div class="row" style="top:36px;background:#fff">
<div class="a" style="left:0;top:0;width:256px;height:18px;background:#e0f2fc"></div>
<div class="a" style="left:0;top:17px;width:331px;height:1px;background:#c8c8c8"></div>
<div class="a" style="left:76px;top:0;width:1px;height:18px;background:#c8c8c8"></div>
<div class="a" style="left:109px;top:0;width:1px;height:18px;background:#c8c8c8"></div>
<div class="a" style="left:166px;top:0;width:1px;height:18px;background:#c8c8c8"></div>
<div class="a" style="left:223px;top:0;width:1px;height:18px;background:#c8c8c8"></div>
<div class="a" style="left:256px;top:0;width:1px;height:18px;background:#c8c8c8"></div>
<div class="a" style="left:297px;top:0;width:1px;height:18px;background:#c8c8c8"></div>
<div class="a" style="left:330px;top:0;width:1px;height:18px;background:#c8c8c8"></div>
<div class="cb"></div>
</div>
<div class="row" style="top:54px;background:#fff">
<div class="a" style="left:0;top:0;width:256px;height:18px;background:#f8fbff"></div>
<div class="a" style="left:0;top:17px;width:331px;height:1px;background:#c8c8c8"></div>
<div class="a" style="left:76px;top:0;width:1px;height:18px;background:#c8c8c8"></div>
<div class="a" style="left:109px;top:0;width:1px;height:18px;background:#c8c8c8"></div>
<div class="a" style="left:166px;top:0;width:1px;height:18px;background:#c8c8c8"></div>
<div class="a" style="left:223px;top:0;width:1px;height:18px;background:#c8c8c8"></div>
<div class="a" style="left:256px;top:0;width:1px;height:18px;background:#c8c8c8"></div>
<div class="a" style="left:297px;top:0;width:1px;height:18px;background:#c8c8c8"></div>
<div class="a" style="left:330px;top:0;width:1px;height:18px;background:#c8c8c8"></div>
<div class="c" style="left:76px;width:33px;text-align:center;font-family:Liberation Mono;font-size:10.5px;color:#111;padding-top:1px">m</div>
<div class="c num" style="left:109px;width:53.5px">10.25</div>
<div class="c num" style="left:166px;width:53.5px">10.25</div>
<div class="cb"></div>
</div>
<div class="row" style="top:72px;background:#fff">
<div class="a" style="left:0;top:0;width:256px;height:18px;background:#f8fbff"></div>
<div class="a" style="left:0;top:17px;width:331px;height:1px;background:#c8c8c8"></div>
<div class="a" style="left:76px;top:0;width:1px;height:18px;background:#c8c8c8"></div>
<div class="a" style="left:109px;top:0;width:1px;height:18px;background:#c8c8c8"></div>
<div class="a" style="left:166px;top:0;width:1px;height:18px;background:#c8c8c8"></div>
<div class="a" style="left:223px;top:0;width:1px;height:18px;background:#c8c8c8"></div>
<div class="a" style="left:256px;top:0;width:1px;height:18px;background:#c8c8c8"></div>
<div class="a" style="left:297px;top:0;width:1px;height:18px;background:#c8c8c8"></div>
<div class="a" style="left:330px;top:0;width:1px;height:18px;background:#c8c8c8"></div>
<div class="c" style="left:76px;width:33px;text-align:center;font-family:Liberation Mono;font-size:10.5px;color:#111;padding-top:1px">m</div>
<div class="c num" style="left:109px;width:53.5px">596.73</div>
<div class="c num" style="left:166px;width:53.5px">596.73</div>
<div class="cb"></div>
</div>
<div class="row" style="top:90px;background:#fff">
<div class="a" style="left:0;top:0;width:256px;height:18px;background:#f8fbff"></div>
<div class="a" style="left:0;top:17px;width:331px;height:1px;background:#c8c8c8"></div>
<div class="a" style="left:76px;top:0;width:1px;height:18px;background:#c8c8c8"></div>
<div class="a" style="left:109px;top:0;width:1px;height:18px;background:#c8c8c8"></div>
<div class="a" style="left:166px;top:0;width:1px;height:18px;background:#c8c8c8"></div>
<div class="a" style="left:223px;top:0;width:1px;height:18px;background:#c8c8c8"></div>
<div class="a" style="left:256px;top:0;width:1px;height:18px;background:#c8c8c8"></div>
<div class="a" style="left:297px;top:0;width:1px;height:18px;background:#c8c8c8"></div>
<div class="a" style="left:330px;top:0;width:1px;height:18px;background:#c8c8c8"></div>
<div class="c" style="left:76px;width:33px;text-align:center;font-family:Liberation Mono;font-size:10.5px;color:#111;padding-top:1px">m</div>
<div class="c num" style="left:109px;width:53.5px">141.8</div>
<div class="c num" style="left:166px;width:53.5px">141.8</div>
<div class="cb"></div>
</div>
<div class="row" style="top:108px;background:#fff">
<div class="a" style="left:0;top:0;width:256px;height:18px;background:#f8fbff"></div>
<div class="a" style="left:0;top:17px;width:331px;height:1px;background:#c8c8c8"></div>
<div class="a" style="left:76px;top:0;width:1px;height:18px;background:#c8c8c8"></div>
<div class="a" style="left:109px;top:0;width:1px;height:18px;background:#c8c8c8"></div>
<div class="a" style="left:166px;top:0;width:1px;height:18px;background:#c8c8c8"></div>
<div class="a" style="left:223px;top:0;width:1px;height:18px;background:#c8c8c8"></div>
<div class="a" style="left:256px;top:0;width:1px;height:18px;background:#c8c8c8"></div>
<div class="a" style="left:297px;top:0;width:1px;height:18px;background:#c8c8c8"></div>
<div class="a" style="left:330px;top:0;width:1px;height:18px;background:#c8c8c8"></div>
<div class="c" style="left:76px;width:33px;text-align:center;font-family:Liberation Mono;font-size:10.5px;color:#111;padding-top:1px">m</div>
<div class="c num" style="left:109px;width:53.5px">423.65</div>
<div class="c num" style="left:166px;width:53.5px">423.65</div>
<div class="cb"></div>
</div>
<div class="row" style="top:126px;background:#fff">
<div class="a" style="left:0;top:0;width:256px;height:18px;background:#f8fbff"></div>
<div class="a" style="left:0;top:17px;width:331px;height:1px;background:#c8c8c8"></div>
<div class="a" style="left:76px;top:0;width:1px;height:18px;background:#c8c8c8"></div>
<div class="a" style="left:109px;top:0;width:1px;height:18px;background:#c8c8c8"></div>
<div class="a" style="left:166px;top:0;width:1px;height:18px;background:#c8c8c8"></div>
<div class="a" style="left:223px;top:0;width:1px;height:18px;background:#c8c8c8"></div>
<div class="a" style="left:256px;top:0;width:1px;height:18px;background:#c8c8c8"></div>
<div class="a" style="left:297px;top:0;width:1px;height:18px;background:#c8c8c8"></div>
<div class="a" style="left:330px;top:0;width:1px;height:18px;background:#c8c8c8"></div>
<div class="c" style="left:76px;width:33px;text-align:center;font-family:Liberation Mono;font-size:10.5px;color:#111;padding-top:1px">m</div>
<div class="c num" style="left:109px;width:53.5px">7.2</div>
<div class="c num" style="left:166px;width:53.5px">7.2</div>
<div class="cb"></div>
</div>
<div class="row" style="top:144px;background:#fff">
<div class="a" style="left:0;top:0;width:256px;height:18px;background:#f8fbff"></div>
<div class="a" style="left:0;top:17px;width:331px;height:1px;background:#c8c8c8"></div>
<div class="a" style="left:76px;top:0;width:1px;height:18px;background:#c8c8c8"></div>
<div class="a" style="left:109px;top:0;width:1px;height:18px;background:#c8c8c8"></div>
<div class="a" style="left:166px;top:0;width:1px;height:18px;background:#c8c8c8"></div>
<div class="a" style="left:223px;top:0;width:1px;height:18px;background:#c8c8c8"></div>
<div class="a" style="left:256px;top:0;width:1px;height:18px;background:#c8c8c8"></div>
<div class="a" style="left:297px;top:0;width:1px;height:18px;background:#c8c8c8"></div>
<div class="a" style="left:330px;top:0;width:1px;height:18px;background:#c8c8c8"></div>
<div class="c" style="left:76px;width:33px;text-align:center;font-family:Liberation Mono;font-size:10.5px;color:#111;padding-top:1px">m</div>
<div class="c num" style="left:109px;width:53.5px">3.6</div>
<div class="c num" style="left:166px;width:53.5px">3.6</div>
<div class="cb"></div>
</div>
<div class="row" style="top:162px;background:#fff">
<div class="a" style="left:0;top:0;width:256px;height:18px;background:#f8fbff"></div>
<div class="a" style="left:0;top:17px;width:331px;height:1px;background:#c8c8c8"></div>
<div class="a" style="left:76px;top:0;width:1px;height:18px;background:#c8c8c8"></div>
<div class="a" style="left:109px;top:0;width:1px;height:18px;background:#c8c8c8"></div>
<div class="a" style="left:166px;top:0;width:1px;height:18px;background:#c8c8c8"></div>
<div class="a" style="left:223px;top:0;width:1px;height:18px;background:#c8c8c8"></div>
<div class="a" style="left:256px;top:0;width:1px;height:18px;background:#c8c8c8"></div>
<div class="a" style="left:297px;top:0;width:1px;height:18px;background:#c8c8c8"></div>
<div class="a" style="left:330px;top:0;width:1px;height:18px;background:#c8c8c8"></div>
<div class="c" style="left:76px;width:33px;text-align:center;font-family:Liberation Mono;font-size:10.5px;color:#111;padding-top:1px">m</div>
<div class="c num" style="left:109px;width:53.5px">40.2</div>
<div class="c num" style="left:166px;width:53.5px">40.2</div>
<div class="cb"></div>
</div>
<div class="row" style="top:180px;background:#fff">
<div class="a" style="left:0;top:0;width:256px;height:18px;background:#f8fbff"></div>
<div class="a" style="left:0;top:17px;width:331px;height:1px;background:#c8c8c8"></div>
<div class="a" style="left:76px;top:0;width:1px;height:18px;background:#c8c8c8"></div>
<div class="a" style="left:109px;top:0;width:1px;height:18px;background:#c8c8c8"></div>
<div class="a" style="left:166px;top:0;width:1px;height:18px;background:#c8c8c8"></div>
<div class="a" style="left:223px;top:0;width:1px;height:18px;background:#c8c8c8"></div>
<div class="a" style="left:256px;top:0;width:1px;height:18px;background:#c8c8c8"></div>
<div class="a" style="left:297px;top:0;width:1px;height:18px;background:#c8c8c8"></div>
<div class="a" style="left:330px;top:0;width:1px;height:18px;background:#c8c8c8"></div>
<div class="c" style="left:-2px;color:#555;font-size:12px">×100/200. . .</div>
<div class="c" style="left:76px;width:33px;text-align:center;color:#111;font-size:12px">个</div>
<div class="c num" style="left:109px;width:53.5px">2</div>
<div class="c num" style="left:166px;width:53.5px">2</div>
<div class="cb"></div>
</div>
<div class="row" style="top:198px;background:#fff">
<div class="a" style="left:0;top:0;width:256px;height:18px;background:#f8fbff"></div>
<div class="a" style="left:0;top:17px;width:331px;height:1px;background:#c8c8c8"></div>
<div class="a" style="left:76px;top:0;width:1px;height:18px;background:#c8c8c8"></div>
<div class="a" style="left:109px;top:0;width:1px;height:18px;background:#c8c8c8"></div>
<div class="a" style="left:166px;top:0;width:1px;height:18px;background:#c8c8c8"></div>
<div class="a" style="left:223px;top:0;width:1px;height:18px;background:#c8c8c8"></div>
<div class="a" style="left:256px;top:0;width:1px;height:18px;background:#c8c8c8"></div>
<div class="a" style="left:297px;top:0;width:1px;height:18px;background:#c8c8c8"></div>
<div class="a" style="left:330px;top:0;width:1px;height:18px;background:#c8c8c8"></div>
<div class="c" style="left:-2px;color:#555;font-size:12px">×200</div>
<div class="c" style="left:76px;width:33px;text-align:center;color:#111;font-size:12px">个</div>
<div class="c num" style="left:109px;width:53.5px">5</div>
<div class="c num" style="left:166px;width:53.5px">5</div>
<div class="cb"></div>
</div>
<div class="row" style="top:216px;background:#fff">
<div class="a" style="left:0;top:0;width:256px;height:18px;background:#f8fbff"></div>
<div class="a" style="left:0;top:17px;width:331px;height:1px;background:#c8c8c8"></div>
<div class="a" style="left:76px;top:0;width:1px;height:18px;background:#c8c8c8"></div>
<div class="a" style="left:109px;top:0;width:1px;height:18px;background:#c8c8c8"></div>
<div class="a" style="left:166px;top:0;width:1px;height:18px;background:#c8c8c8"></div>
<div class="a" style="left:223px;top:0;width:1px;height:18px;background:#c8c8c8"></div>
<div class="a" style="left:256px;top:0;width:1px;height:18px;background:#c8c8c8"></div>
<div class="a" style="left:297px;top:0;width:1px;height:18px;background:#c8c8c8"></div>
<div class="a" style="left:330px;top:0;width:1px;height:18px;background:#c8c8c8"></div>
<div class="c" style="left:-2px;color:#555;font-size:12px">×200</div>
<div class="c" style="left:76px;width:33px;text-align:center;color:#111;font-size:12px">个</div>
<div class="c num" style="left:109px;width:53.5px">1</div>
<div class="c num" style="left:166px;width:53.5px">1</div>
<div class="cb"></div>
</div>
<div class="row" style="top:234px;background:#fff">
<div class="a" style="left:0;top:0;width:256px;height:18px;background:#f8fbff"></div>
<div class="a" style="left:0;top:17px;width:331px;height:1px;background:#c8c8c8"></div>
<div class="a" style="left:76px;top:0;width:1px;height:18px;background:#c8c8c8"></div>
<div class="a" style="left:109px;top:0;width:1px;height:18px;background:#c8c8c8"></div>
<div class="a" style="left:166px;top:0;width:1px;height:18px;background:#c8c8c8"></div>
<div class="a" style="left:223px;top:0;width:1px;height:18px;background:#c8c8c8"></div>
<div class="a" style="left:256px;top:0;width:1px;height:18px;background:#c8c8c8"></div>
<div class="a" style="left:297px;top:0;width:1px;height:18px;background:#c8c8c8"></div>
<div class="a" style="left:330px;top:0;width:1px;height:18px;background:#c8c8c8"></div>
<div class="c" style="left:-2px;color:#555;font-size:12px">/200×100. . .</div>
<div class="c" style="left:76px;width:33px;text-align:center;color:#111;font-size:12px">个</div>
<div class="c num" style="left:109px;width:53.5px">1</div>
<div class="c num" style="left:166px;width:53.5px">1</div>
<div class="cb"></div>
</div>
<div class="row" style="top:252px;background:#fff">
<div class="a" style="left:0;top:0;width:256px;height:18px;background:#f8fbff"></div>
<div class="a" style="left:0;top:17px;width:331px;height:1px;background:#c8c8c8"></div>
<div class="a" style="left:76px;top:0;width:1px;height:18px;background:#c8c8c8"></div>
<div class="a" style="left:109px;top:0;width:1px;height:18px;background:#c8c8c8"></div>
<div class="a" style="left:166px;top:0;width:1px;height:18px;background:#c8c8c8"></div>
<div class="a" style="left:223px;top:0;width:1px;height:18px;background:#c8c8c8"></div>
<div class="a" style="left:256px;top:0;width:1px;height:18px;background:#c8c8c8"></div>
<div class="a" style="left:297px;top:0;width:1px;height:18px;background:#c8c8c8"></div>
<div class="a" style="left:330px;top:0;width:1px;height:18px;background:#c8c8c8"></div>
<div class="c" style="left:-2px;color:#555;font-size:12px">/400×200. . .</div>
<div class="c" style="left:76px;width:33px;text-align:center;color:#111;font-size:12px">个</div>
<div class="c num" style="left:109px;width:53.5px">1</div>
<div class="c num" style="left:166px;width:53.5px">1</div>
<div class="cb"></div>
</div>
<div class="row" style="top:270px;background:#fff">
<div class="a" style="left:0;top:0;width:256px;height:18px;background:#f8fbff"></div>
<div class="a" style="left:0;top:17px;width:331px;height:1px;background:#c8c8c8"></div>
<div class="a" style="left:76px;top:0;width:1px;height:18px;background:#c8c8c8"></div>
<div class="a" style="left:109px;top:0;width:1px;height:18px;background:#c8c8c8"></div>
<div class="a" style="left:166px;top:0;width:1px;height:18px;background:#c8c8c8"></div>
<div class="a" style="left:223px;top:0;width:1px;height:18px;background:#c8c8c8"></div>
<div class="a" style="left:256px;top:0;width:1px;height:18px;background:#c8c8c8"></div>
<div class="a" style="left:297px;top:0;width:1px;height:18px;background:#c8c8c8"></div>
<div class="a" style="left:330px;top:0;width:1px;height:18px;background:#c8c8c8"></div>
<div class="c" style="left:-2px;color:#555;font-size:12px">/400×200. . .</div>
<div class="c" style="left:76px;width:33px;text-align:center;color:#111;font-size:12px">个</div>
<div class="c num" style="left:109px;width:53.5px">1</div>
<div class="c num" style="left:166px;width:53.5px">1</div>
<div class="cb"></div>
</div>
<div class="row" style="top:288px;background:#fff">
<div class="a" style="left:0;top:0;width:256px;height:18px;background:#f8fbff"></div>
<div class="a" style="left:0;top:17px;width:331px;height:1px;background:#c8c8c8"></div>
<div class="a" style="left:76px;top:0;width:1px;height:18px;background:#c8c8c8"></div>
<div class="a" style="left:109px;top:0;width:1px;height:18px;background:#c8c8c8"></div>
<div class="a" style="left:166px;top:0;width:1px;height:18px;background:#c8c8c8"></div>
<div class="a" style="left:223px;top:0;width:1px;height:18px;background:#c8c8c8"></div>
<div class="a" style="left:256px;top:0;width:1px;height:18px;background:#c8c8c8"></div>
<div class="a" style="left:297px;top:0;width:1px;height:18px;background:#c8c8c8"></div>
<div class="a" style="left:330px;top:0;width:1px;height:18px;background:#c8c8c8"></div>
<div class="c" style="left:-2px;color:#555;font-size:12px">×200/400. . .</div>
<div class="c" style="left:76px;width:33px;text-align:center;color:#111;font-size:12px">个</div>
<div class="c num" style="left:109px;width:53.5px">2</div>
<div class="c num" style="left:166px;width:53.5px">2</div>
<div class="cb"></div>
</div>
<div class="row" style="top:306px;background:#fff">
<div class="a" style="left:0;top:0;width:256px;height:18px;background:#f8fbff"></div>
<div class="a" style="left:0;top:17px;width:331px;height:1px;background:#c8c8c8"></div>
<div class="a" style="left:76px;top:0;width:1px;height:18px;background:#c8c8c8"></div>
<div class="a" style="left:109px;top:0;width:1px;height:18px;background:#c8c8c8"></div>
<div class="a" style="left:166px;top:0;width:1px;height:18px;background:#c8c8c8"></div>
<div class="a" style="left:223px;top:0;width:1px;height:18px;background:#c8c8c8"></div>
<div class="a" style="left:256px;top:0;width:1px;height:18px;background:#c8c8c8"></div>
<div class="a" style="left:297px;top:0;width:1px;height:18px;background:#c8c8c8"></div>
<div class="a" style="left:330px;top:0;width:1px;height:18px;background:#c8c8c8"></div>
<div class="c" style="left:-2px;color:#555;font-size:12px">/400×200. . .</div>
<div class="c" style="left:76px;width:33px;text-align:center;color:#111;font-size:12px">个</div>
<div class="c num" style="left:109px;width:53.5px">2</div>
<div class="c num" style="left:166px;width:53.5px">2</div>
<div class="cb"></div>
</div>
<div class="row" style="top:324px;background:#fff">
<div class="a" style="left:0;top:0;width:256px;height:18px;background:#f8fbff"></div>
<div class="a" style="left:0;top:17px;width:331px;height:1px;background:#c8c8c8"></div>
<div class="a" style="left:76px;top:0;width:1px;height:18px;background:#c8c8c8"></div>
<div class="a" style="left:109px;top:0;width:1px;height:18px;background:#c8c8c8"></div>
<div class="a" style="left:166px;top:0;width:1px;height:18px;background:#c8c8c8"></div>
<div class="a" style="left:223px;top:0;width:1px;height:18px;background:#c8c8c8"></div>
<div class="a" style="left:256px;top:0;width:1px;height:18px;background:#c8c8c8"></div>
<div class="a" style="left:297px;top:0;width:1px;height:18px;background:#c8c8c8"></div>
<div class="a" style="left:330px;top:0;width:1px;height:18px;background:#c8c8c8"></div>
<div class="c" style="left:-2px;color:#555;font-size:12px">/200×100. . .</div>
<div class="c" style="left:76px;width:33px;text-align:center;color:#111;font-size:12px">个</div>
<div class="c num" style="left:109px;width:53.5px">13</div>
<div class="c num" style="left:166px;width:53.5px">13</div>
<div class="cb"></div>
</div>
<div class="row" style="top:342px;background:#fff">
<div class="a" style="left:0;top:0;width:256px;height:18px;background:#f8fbff"></div>
<div class="a" style="left:0;top:17px;width:331px;height:1px;background:#c8c8c8"></div>
<div class="a" style="left:76px;top:0;width:1px;height:18px;background:#c8c8c8"></div>
<div class="a" style="left:109px;top:0;width:1px;height:18px;background:#c8c8c8"></div>
<div class="a" style="left:166px;top:0;width:1px;height:18px;background:#c8c8c8"></div>
<div class="a" style="left:223px;top:0;width:1px;height:18px;background:#c8c8c8"></div>
<div class="a" style="left:256px;top:0;width:1px;height:18px;background:#c8c8c8"></div>
<div class="a" style="left:297px;top:0;width:1px;height:18px;background:#c8c8c8"></div>
<div class="a" style="left:330px;top:0;width:1px;height:18px;background:#c8c8c8"></div>
<div class="c" style="left:-2px;color:#555;font-size:12px">×100</div>
<div class="c" style="left:76px;width:33px;text-align:center;color:#111;font-size:12px">个</div>
<div class="c num" style="left:109px;width:53.5px">53</div>
<div class="c num" style="left:166px;width:53.5px">53</div>
<div class="cb"></div>
</div>
<div class="row" style="top:360px;background:#fff">
<div class="a" style="left:0;top:0;width:256px;height:18px;background:#f8fbff"></div>
<div class="a" style="left:0;top:17px;width:331px;height:1px;background:#c8c8c8"></div>
<div class="a" style="left:76px;top:0;width:1px;height:18px;background:#c8c8c8"></div>
<div class="a" style="left:109px;top:0;width:1px;height:18px;background:#c8c8c8"></div>
<div class="a" style="left:166px;top:0;width:1px;height:18px;background:#c8c8c8"></div>
<div class="a" style="left:223px;top:0;width:1px;height:18px;background:#c8c8c8"></div>
<div class="a" style="left:256px;top:0;width:1px;height:18px;background:#c8c8c8"></div>
<div class="a" style="left:297px;top:0;width:1px;height:18px;background:#c8c8c8"></div>
<div class="a" style="left:330px;top:0;width:1px;height:18px;background:#c8c8c8"></div>
<div class="c" style="left:-2px;color:#555;font-size:12px">/600×200. . .</div>
<div class="c" style="left:76px;width:33px;text-align:center;color:#111;font-size:12px">个</div>
<div class="c num" style="left:109px;width:53.5px">1</div>
<div class="c num" style="left:166px;width:53.5px">1</div>
<div class="cb"></div>
</div>
<div class="row" style="top:378px;background:#fff">
<div class="a" style="left:0;top:0;width:256px;height:18px;background:#f8fbff"></div>
<div class="a" style="left:0;top:17px;width:331px;height:1px;background:#c8c8c8"></div>
<div class="a" style="left:76px;top:0;width:1px;height:18px;background:#c8c8c8"></div>
<div class="a" style="left:109px;top:0;width:1px;height:18px;background:#c8c8c8"></div>
<div class="a" style="left:166px;top:0;width:1px;height:18px;background:#c8c8c8"></div>
<div class="a" style="left:223px;top:0;width:1px;height:18px;background:#c8c8c8"></div>
<div class="a" style="left:256px;top:0;width:1px;height:18px;background:#c8c8c8"></div>
<div class="a" style="left:297px;top:0;width:1px;height:18px;background:#c8c8c8"></div>
<div class="a" style="left:330px;top:0;width:1px;height:18px;background:#c8c8c8"></div>
<div class="c" style="left:-2px;color:#555;font-size:12px">×200</div>
<div class="c" style="left:76px;width:33px;text-align:center;color:#111;font-size:12px">个</div>
<div class="c num" style="left:109px;width:53.5px">2</div>
<div class="c num" style="left:166px;width:53.5px">2</div>
<div class="cb"></div>
</div>
<div class="row" style="top:396px;background:#fff">
<div class="a" style="left:0;top:0;width:256px;height:18px;background:#f8fbff"></div>
<div class="a" style="left:0;top:17px;width:331px;height:1px;background:#c8c8c8"></div>
<div class="a" style="left:76px;top:0;width:1px;height:18px;background:#c8c8c8"></div>
<div class="a" style="left:109px;top:0;width:1px;height:18px;background:#c8c8c8"></div>
<div class="a" style="left:166px;top:0;width:1px;height:18px;background:#c8c8c8"></div>
<div class="a" style="left:223px;top:0;width:1px;height:18px;background:#c8c8c8"></div>
<div class="a" style="left:256px;top:0;width:1px;height:18px;background:#c8c8c8"></div>
<div class="a" style="left:297px;top:0;width:1px;height:18px;background:#c8c8c8"></div>
<div class="a" style="left:330px;top:0;width:1px;height:18px;background:#c8c8c8"></div>
<div class="c" style="left:-2px;color:#555;font-size:12px">/400×200. . .</div>
<div class="c" style="left:76px;width:33px;text-align:center;color:#111;font-size:12px">个</div>
<div class="c num" style="left:109px;width:53.5px">1</div>
<div class="c num" style="left:166px;width:53.5px">1</div>
<div class="cb"></div>
</div>
<div class="row" style="top:414px;background:#fff">
<div class="a" style="left:0;top:0;width:256px;height:18px;background:#f8fbff"></div>
<div class="a" style="left:0;top:17px;width:331px;height:1px;background:#c8c8c8"></div>
<div class="a" style="left:76px;top:0;width:1px;height:18px;background:#c8c8c8"></div>
<div class="a" style="left:109px;top:0;width:1px;height:18px;background:#c8c8c8"></div>
<div class="a" style="left:166px;top:0;width:1px;height:18px;background:#c8c8c8"></div>
<div class="a" style="left:223px;top:0;width:1px;height:18px;background:#c8c8c8"></div>
<div class="a" style="left:256px;top:0;width:1px;height:18px;background:#c8c8c8"></div>
<div class="a" style="left:297px;top:0;width:1px;height:18px;background:#c8c8c8"></div>
<div class="a" style="left:330px;top:0;width:1px;height:18px;background:#c8c8c8"></div>
<div class="c" style="left:-2px;color:#555;font-size:12px">/200×100. . .</div>
<div class="c" style="left:76px;width:33px;text-align:center;color:#111;font-size:12px">个</div>
<div class="c num" style="left:109px;width:53.5px">1</div>
<div class="c num" style="left:166px;width:53.5px">1</div>
<div class="cb"></div>
</div>
<div class="row" style="top:432px;background:#fff">
<div class="a" style="left:0;top:0;width:256px;height:18px;background:#f8fbff"></div>
<div class="a" style="left:0;top:17px;width:331px;height:1px;background:#c8c8c8"></div>
<div class="a" style="left:76px;top:0;width:1px;height:18px;background:#c8c8c8"></div>
<div class="a" style="left:109px;top:0;width:1px;height:18px;background:#c8c8c8"></div>
<div class="a" style="left:166px;top:0;width:1px;height:18px;background:#c8c8c8"></div>
<div class="a" style="left:223px;top:0;width:1px;height:18px;background:#c8c8c8"></div>
<div class="a" style="left:256px;top:0;width:1px;height:18px;background:#c8c8c8"></div>
<div class="a" style="left:297px;top:0;width:1px;height:18px;background:#c8c8c8"></div>
<div class="a" style="left:330px;top:0;width:1px;height:18px;background:#c8c8c8"></div>
<div class="c" style="left:-2px;color:#555;font-size:12px">/200×100. . .</div>
<div class="c" style="left:76px;width:33px;text-align:center;color:#111;font-size:12px">个</div>
<div class="c num" style="left:109px;width:53.5px">5</div>
<div class="c num" style="left:166px;width:53.5px">5</div>
<div class="cb"></div>
</div>
<div class="row" style="top:450px;background:#fff">
<div class="a" style="left:0;top:0;width:256px;height:18px;background:#f8fbff"></div>
<div class="a" style="left:0;top:17px;width:331px;height:1px;background:#c8c8c8"></div>
<div class="a" style="left:76px;top:0;width:1px;height:18px;background:#c8c8c8"></div>
<div class="a" style="left:109px;top:0;width:1px;height:18px;background:#c8c8c8"></div>
<div class="a" style="left:166px;top:0;width:1px;height:18px;background:#c8c8c8"></div>
<div class="a" style="left:223px;top:0;width:1px;height:18px;background:#c8c8c8"></div>
<div class="a" style="left:256px;top:0;width:1px;height:18px;background:#c8c8c8"></div>
<div class="a" style="left:297px;top:0;width:1px;height:18px;background:#c8c8c8"></div>
<div class="a" style="left:330px;top:0;width:1px;height:18px;background:#c8c8c8"></div>
<div class="c" style="left:-2px;color:#555;font-size:12px">/300×200. . .</div>
<div class="c" style="left:76px;width:33px;text-align:center;color:#111;font-size:12px">个</div>
<div class="c num" style="left:109px;width:53.5px">3</div>
<div class="c num" style="left:166px;width:53.5px">3</div>
<div class="cb"></div>
</div>
<div class="row" style="top:468px;background:#fff">
<div class="a" style="left:0;top:0;width:256px;height:18px;background:#e0f2fc"></div>
<div class="a" style="left:0;top:17px;width:331px;height:1px;background:#c8c8c8"></div>
<div class="a" style="left:76px;top:0;width:1px;height:18px;background:#c8c8c8"></div>
<div class="a" style="left:109px;top:0;width:1px;height:18px;background:#c8c8c8"></div>
<div class="a" style="left:166px;top:0;width:1px;height:18px;background:#c8c8c8"></div>
<div class="a" style="left:223px;top:0;width:1px;height:18px;background:#c8c8c8"></div>
<div class="a" style="left:256px;top:0;width:1px;height:18px;background:#c8c8c8"></div>
<div class="a" style="left:297px;top:0;width:1px;height:18px;background:#c8c8c8"></div>
<div class="a" style="left:330px;top:0;width:1px;height:18px;background:#c8c8c8"></div>
<div class="cb"></div>
</div>
<div class="row" style="top:486px;background:#fff">
<div class="a" style="left:0;top:0;width:256px;height:18px;background:#f8fbff"></div>
<div class="a" style="left:0;top:17px;width:331px;height:1px;background:#c8c8c8"></div>
<div class="a" style="left:76px;top:0;width:1px;height:18px;background:#c8c8c8"></div>
<div class="a" style="left:109px;top:0;width:1px;height:18px;background:#c8c8c8"></div>
<div class="a" style="left:166px;top:0;width:1px;height:18px;background:#c8c8c8"></div>
<div class="a" style="left:223px;top:0;width:1px;height:18px;background:#c8c8c8"></div>
<div class="a" style="left:256px;top:0;width:1px;height:18px;background:#c8c8c8"></div>
<div class="a" style="left:297px;top:0;width:1px;height:18px;background:#c8c8c8"></div>
<div class="a" style="left:330px;top:0;width:1px;height:18px;background:#c8c8c8"></div>
<div class="c" style="left:76px;width:33px;text-align:center;font-family:Liberation Mono;font-size:10.5px;color:#111;padding-top:1px">m</div>
<div class="c num" style="left:109px;width:53.5px">3.07</div>
<div class="c num" style="left:166px;width:53.5px">3.07</div>
<div class="cb"></div>
</div>
<div class="row" style="top:504px;background:#fff">
<div class="a" style="left:0;top:0;width:256px;height:18px;background:#f8fbff"></div>
<div class="a" style="left:0;top:17px;width:331px;height:1px;background:#c8c8c8"></div>
<div class="a" style="left:76px;top:0;width:1px;height:18px;background:#c8c8c8"></div>
<div class="a" style="left:109px;top:0;width:1px;height:18px;background:#c8c8c8"></div>
<div class="a" style="left:166px;top:0;width:1px;height:18px;background:#c8c8c8"></div>
<div class="a" style="left:223px;top:0;width:1px;height:18px;background:#c8c8c8"></div>
<div class="a" style="left:256px;top:0;width:1px;height:18px;background:#c8c8c8"></div>
<div class="a" style="left:297px;top:0;width:1px;height:18px;background:#c8c8c8"></div>
<div class="a" style="left:330px;top:0;width:1px;height:18px;background:#c8c8c8"></div>
<div class="c" style="left:76px;width:33px;text-align:center;font-family:Liberation Mono;font-size:10.5px;color:#111;padding-top:1px">m</div>
<div class="c num" style="left:109px;width:53.5px">106.8</div>
<div class="c num" style="left:166px;width:53.5px">106.8</div>
<div class="cb"></div>
</div>
<div class="row" style="top:522px;background:#fff">
<div class="a" style="left:0;top:0;width:256px;height:18px;background:#f8fbff"></div>
<div class="a" style="left:0;top:17px;width:331px;height:1px;background:#c8c8c8"></div>
<div class="a" style="left:76px;top:0;width:1px;height:18px;background:#c8c8c8"></div>
<div class="a" style="left:109px;top:0;width:1px;height:18px;background:#c8c8c8"></div>
<div class="a" style="left:166px;top:0;width:1px;height:18px;background:#c8c8c8"></div>
<div class="a" style="left:223px;top:0;width:1px;height:18px;background:#c8c8c8"></div>
<div class="a" style="left:256px;top:0;width:1px;height:18px;background:#c8c8c8"></div>
<div class="a" style="left:297px;top:0;width:1px;height:18px;background:#c8c8c8"></div>
<div class="a" style="left:330px;top:0;width:1px;height:18px;background:#c8c8c8"></div>
<div class="c" style="left:76px;width:33px;text-align:center;font-family:Liberation Mono;font-size:10.5px;color:#111;padding-top:1px">m</div>
<div class="c num" style="left:109px;width:53.5px">188.47</div>
<div class="c num" style="left:166px;width:53.5px">188.47</div>
<div class="cb"></div>
</div>
<div class="row" style="top:540px;background:#fff">
<div class="a" style="left:0;top:0;width:256px;height:18px;background:#f8fbff"></div>
<div class="a" style="left:0;top:17px;width:331px;height:1px;background:#c8c8c8"></div>
<div class="a" style="left:76px;top:0;width:1px;height:18px;background:#c8c8c8"></div>
<div class="a" style="left:109px;top:0;width:1px;height:18px;background:#c8c8c8"></div>
<div class="a" style="left:166px;top:0;width:1px;height:18px;background:#c8c8c8"></div>
<div class="a" style="left:223px;top:0;width:1px;height:18px;background:#c8c8c8"></div>
<div class="a" style="left:256px;top:0;width:1px;height:18px;background:#c8c8c8"></div>
<div class="a" style="left:297px;top:0;width:1px;height:18px;background:#c8c8c8"></div>
<div class="a" style="left:330px;top:0;width:1px;height:18px;background:#c8c8c8"></div>
<div class="c" style="left:76px;width:33px;text-align:center;font-family:Liberation Mono;font-size:10.5px;color:#111;padding-top:1px">m</div>
<div class="c num" style="left:109px;width:53.5px">2.4</div>
<div class="c num" style="left:166px;width:53.5px">2.4</div>
<div class="cb"></div>
</div>
</div>
<div class="a" style="left:331px;top:171px;width:17px;height:563px;background:#f0f0f0;border-left:1px solid #dadada"></div>
<div class="a" style="left:332px;top:188px;width:15px;height:17px;background:#cdcdcd"></div>
<svg class="a" style="left:331px;top:175px" width="17" height="12"><polyline points="5,8.5 9,4.5 13,8.5" fill="none" stroke="#505050" stroke-width="2.2"/></svg>
<svg class="a" style="left:331px;top:720px" width="17" height="12"><polyline points="4.5,3.5 8.5,7.5 12.5,3.5" fill="none" stroke="#505050" stroke-width="2"/></svg>
<div class="a" style="left:347px;top:171px;width:1px;height:564px;background:#9a9a9a"></div>
<div class="a" style="left:0;top:734px;width:348px;height:1px;background:#6a6a6a"></div>
<svg class="a" style="left:38px;top:734px" width="62" height="9"><path d="M0.5 0.5 H61 V5 L58 8 H3.5 L0.5 5Z" fill="#a8c8ee" stroke="#7aa6dc"/><path d="M27 2.5 H34 L30.5 6Z" fill="#fff"/></svg>
<div class="a" style="left:0;top:762px;width:348px;height:1px;background:#dcdcdc"></div>
<div class="a" style="left:0;top:766px;width:348px;height:1px;background:#8a8a8a"></div>
<div class="a" style="left:0;top:767px;width:348px;height:2px;background:#d8e4f2"></div>
<div class="a" style="left:0;top:769px;width:345px;height:24px;background:#fff"></div>
<svg class="a" style="left:330px;top:776px" width="12" height="10"><polyline points="1,2 6,7 11,2" fill="none" stroke="#999" stroke-width="1"/></svg>
<div class="a" style="left:0;top:793px;width:348px;height:2px;background:#c8d0da"></div><div id="split" class="a"></div>
<div id="tabs" class="a"></div>
<div class="tab" style="left:356px;width:58px;text-align:center;color:#000">零星项目</div>
<div class="tab" style="left:413px;width:131px;background:#f9b46e;border-color:#e0a060;padding-left:5px;font-size:12px;color:#111">FL22M4CO_E11-...</div>
<svg class="a" style="left:526px;top:133px" width="12" height="11"><path d="M2 1.5 L10 9.5 M10 1.5 L2 9.5" stroke="#f01010" stroke-width="2.6"/></svg>
<div class="tab" style="left:544px;width:46px;text-align:center;color:#000">系统图</div>
<div class="tab" style="left:590px;width:28px"></div>
<svg class="a" style="left:595px;top:128px" width="18" height="19"><path d="M1.5 5.5 H9 L11.5 8 V16.5 H1.5Z" fill="#fff" stroke="#7aa0d0"/><path d="M10 1.5h2.5v2.5h2.5v2.5h-2.5v2.5h-2.5v-2.5h-2.5v-2.5h2.5z" fill="#48a848" stroke="#2a6a2a" stroke-width=".7"/></svg>
<div id="cmd" class="a"></div>
<div class="t" style="left:352px;top:152px;color:#111;font-size:12px">请画一条测量线,请选择终点位置,Esc放弃(x, y):</div>
<div id="canvas" class="a"></div>
<svg class="a" style="left:0;top:0" width="1139" height="795" viewBox="0 0 1139 795">
<g fill="none" stroke="#6c9a6a" stroke-width="1" shape-rendering="crispEdges">
<line x1="352" y1="430.5" x2="1139" y2="430.5" stroke="#8f9b6e"/>
<line x1="352" y1="519.5" x2="1139" y2="519.5"/>
<line x1="421.5" y1="351" x2="421.5" y2="795"/>
<line x1="991.5" y1="351" x2="991.5" y2="795"/>
</g>
<g fill="none" stroke="#6a9a64" stroke-width="1" shape-rendering="crispEdges">
<polygon points="431.9,219.5 451.8,226.0 468.7,238.3 481.0,255.2 487.5,275.1 487.5,295.9 481.0,315.8 468.7,332.7 451.8,345.0 431.9,351.5 411.1,351.5 391.2,345.0 374.3,332.7 362.0,315.8 355.5,295.9 355.5,275.1 362.0,255.2 374.3,238.3 391.2,226.0 411.1,219.5"/>
<polygon points="1002.0,218.8 1021.9,225.3 1038.9,237.6 1051.2,254.6 1057.7,274.5 1057.7,295.5 1051.2,315.4 1038.9,332.4 1021.9,344.7 1002.0,351.2 981.0,351.2 961.1,344.7 944.1,332.4 931.8,315.4 925.3,295.5 925.3,274.5 931.8,254.6 944.1,237.6 961.1,225.3 981.0,218.8"/>
</g>
<g fill="none" stroke="#74a66c" stroke-width="2.4" stroke-linecap="round">
<line x1="413.5" y1="527.5" x2="430" y2="511.5"/>
<line x1="983.5" y1="527.5" x2="1000" y2="511.5"/>
</g>
<g fill="none" stroke="#b4b4b4" stroke-width="1">
<polyline points="424.3,264.7 414.5,264.7 395,283.3 395,313 405,323.7 424.3,323.7 434.8,313 434.8,303.3 424.3,294.5 395,294.5"/>
<polyline points="964.2,264.7 1005.2,264.7 974.7,323.9"/>
<polyline points="667.7,461.3 643.2,461.3 643.2,473.2 662,473.2 669.1,480.6 669.1,492.9 662.6,498.6 649,498.6 643.2,492.2"/>
<polyline points="680.1,467.7 686.5,461.1 686.5,498.6"/>
<line x1="680.1" y1="498.6" x2="692.9" y2="498.6"/>
<polygon points="711.1,461.3 718.5,461.3 724.9,467.3 724.9,492.9 718.5,498.6 711.1,498.6 705,492.9 705,467.3"/>
<polygon points="742.1,461.3 749.5,461.3 755.9,467.3 755.9,492.9 749.5,498.6 742.1,498.6 736,492.9 736,467.3"/>
</g>
<polygon points="648.5,339.5 650,340 688.5,448 693,446.3 691.7,463.5 678.5,451.6 683,450" fill="#ef3a3a"/>
</svg>
<div class="a" style="left:502px;top:563px;width:374px;height:200px;border:1px solid #1883d7;background:#f0f0f0"></div>
<div class="a" style="left:503px;top:564px;width:372px;height:30px;background:#fff"></div>
<svg class="a" style="left:511px;top:570px" width="16" height="16"><defs><radialGradient id="rg" cx=".5" cy=".45" r=".6"><stop offset="0" stop-color="#ff4040"/><stop offset=".6" stop-color="#d00808"/><stop offset="1" stop-color="#880000"/></radialGradient></defs><rect x="0.5" y="0.5" width="15" height="15" rx="1.5" fill="url(#rg)" stroke="#7a7a7a"/><rect x="1" y="12.5" width="14" height="2.5" fill="#e8e8e8"/><ellipse cx="8" cy="4" rx="2.6" ry="1.6" fill="#f4f8fa"/><path d="M6.3 6 H9.7 V11 L10.8 12.5 H5.2 L6.3 11Z" fill="#eef4f8"/></svg>
<div class="t" style="left:532px;top:571px;color:#111;font-size:12px">调整比例</div>
<svg class="a" style="left:853px;top:571px" width="14" height="14"><path d="M1.5 1.5 L12.5 12.5 M12.5 1.5 L1.5 12.5" stroke="#222" stroke-width="1.1"/></svg>
<div class="a" style="left:511px;top:598px;width:362px;height:121px;border:1px solid #d8d8d8"></div>
<div class="t" style="left:523px;top:629px;height:17px;line-height:17px;font-size:14px;color:#111">输入两点之间实际距离</div>
<div class="a" style="left:523px;top:654px;width:295px;height:28px;border:1px solid #0a78d6;background:#fff"></div>
<div class="a" style="left:526px;top:657px;width:33px;height:20px;background:#0078d7"></div>
<div class="t" style="left:527px;top:658px;height:18px;line-height:18px;font-size:14.5px;color:#fff;-webkit-text-stroke:0">5100</div>
<div class="t" style="left:820px;top:659px;height:17px;line-height:17px;font-size:15px;color:#111;-webkit-text-stroke:0">(mm)</div>
<div class="t" style="left:653px;top:687px;height:16px;line-height:16px;font-size:12px;color:#111">提示:输入值的单位为毫米(mm)</div>
<div class="a" style="left:697px;top:727px;width:73px;height:23px;border:2px solid #0a78d6;background:#e1e1e1"></div>
<svg class="a" style="left:708px;top:730px" width="20" height="17"><path d="M1.5 9 L7 15 L18.5 2" fill="none" stroke="#0a3a10" stroke-width="4"/><path d="M1.5 9 L7 15 L18.5 2" fill="none" stroke="#28b038" stroke-width="2.2"/></svg>
<div class="t" style="left:731px;top:731px;height:16px;line-height:16px;font-size:14px;color:#111">确认</div>
<div class="a" style="left:796px;top:727px;width:73px;height:23px;border:1px solid #adadad;background:#e1e1e1"></div>
<svg class="a" style="left:810px;top:730px" width="16" height="17"><path d="M2.5 2.5 L13.5 14.5 M13.5 2.5 L2.5 14.5" stroke="#a01010" stroke-width="3.6" stroke-linecap="round"/><path d="M2.5 2.5 L13.5 14.5" stroke="#d82020" stroke-width="2"/></svg>
<div class="t" style="left:830px;top:731px;height:16px;line-height:16px;font-size:14px;color:#111">取消</div>
<div class="a" style="left:803px;top:642px;width:64px;height:58px;border:6px solid #f03a3a"></div>
<svg class="a" style="left:0;top:0" width="1139" height="795" viewBox="0 0 1139 795" style="pointer-events:none">
<polygon points="663.5,607.8 662.5,609 596.5,652.5 594.5,658.3 577,660.8 586.6,647 592,647" fill="#f03a3a"/>
<polygon points="91.8,54 100.5,70.5 95.5,70 92.2,127 90.2,127 88,70.5 83.5,71.5" fill="#f03a3a"/>
</svg>

</body></html>
